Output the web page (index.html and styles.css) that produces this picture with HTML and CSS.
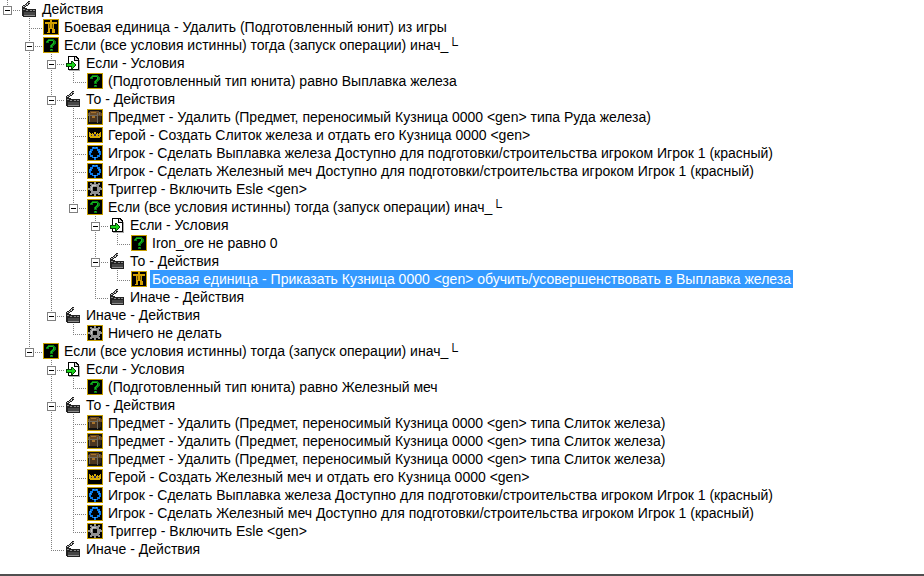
FILE: index.html
```html
<!DOCTYPE html>
<html lang="ru">

<head>
    <meta charset="UTF-8">
    <meta name="viewport" content="width=device-width, initial-scale=1.0">
    <link rel="stylesheet" href="styles.css">
    <title>Действия</title>
</head>

<body>
    <svg class="sprite" aria-hidden="true">
        <symbol id="clap" viewBox="0 0 16 16">
            <path d="M1 8V5h1V4h2V3h1V2h1V1h1V0h2v3H8v1H7v1H5v1H4v1h2v1h9v8H2v-1H1z" fill="#222" />
            <path d="M2 5h1v1H2zM4 4h1v1H4zM6 2h1v2H6zM8 1h1v1H8z" fill="#d0d0d0" />
            <path d="M3 5h1v1H3zM5 3h1v1H5zM7 1h1v1H7z" fill="#777" />
            <path d="M3 11h11v3H3z" fill="#464646" />
            <path d="M2 8h2v1H2zM5 9h2v1H5zM9 9h2v1H9zM12 9h2v1h-2zM3 14h11v1H3z" fill="#8c8c8c" />
        </symbol>
        <symbol id="page" viewBox="0 0 16 16">
            <path d="M3 1h8l3 3v11H3z" fill="#000" />
            <path d="M4 2h5v4h4v8H4z" fill="#fff" />
            <path d="M10 2h1v1h1v1h1v1h-3z" fill="#d8d8d8" />
            <path d="M14 5h1v10h-1zM4 15h11v1H4z" fill="#aaa" />
            <path d="M1 8h5V6h2v1h1v1h1v1h1v2h-1v1H9v1H8v1H6v-2H1z" fill="#074007" />
            <path d="M2 9h5V7h1v1h1v1h1v2H9v1H8v1H7v-2H2z" fill="#19d219" />
        </symbol>
        <symbol id="ask" viewBox="0 0 16 16">
            <path d="M0 0h16v16H0z" fill="#c8a000" />
            <path d="M1 1h14v14H1z" fill="#000" />
            <path d="M4 3h1V2h6v1h1v1h1v3h-1v1h-1v1h-1v2H7V8h1V7h1V6h1V4H6v2H3V4h1zM7 12h3v2H7z" fill="#087c12" />
            <path d="M4 4h1V3h5v1h1v3h-1v1H9v2H8V8h1V7h1V4H5v1H4zM8 12h1v1H8z" fill="#14bd20" />
        </symbol>
        <symbol id="unit" viewBox="0 0 16 16">
            <path d="M0 0h16v16H0z" fill="#c8a000" />
            <path d="M1 1h14v14H1z" fill="#000" />
            <path d="M7 1h2v2h5v2h-3v5h1v4H9v-4H7v4H4v-1h1V5H2V3h5z" fill="#d3a000" />
            <path d="M6 5h1v4H6zM9 5h1v4H9z" fill="#705400" />
        </symbol>
        <symbol id="chest" viewBox="0 0 16 16">
            <path d="M0 0h16v16H0z" fill="#c8a000" />
            <path d="M1 1h14v14H1z" fill="#111" />
            <path d="M1 6V4h1V3h1V2h9v1h2v1h1v3H1z" fill="#6a4a25" />
            <path d="M2 7h9v6H2z" fill="#4b3620" />
            <path d="M11 7h3v5h-1v1h-2z" fill="#30261b" />
            <path d="M1 6h10v1H1zM2 4h1v9H2zM10 4h1v10h-1zM12 3h1v3h-1z" fill="#6f6b60" />
            <path d="M5 7h3v2H5zM4 3h5v1H4z" fill="#a8742d" />
        </symbol>
        <symbol id="crown" viewBox="0 0 16 16">
            <path d="M0 0h16v16H0z" fill="#c8a000" />
            <path d="M1 1h14v14H1z" fill="#000" />
            <path d="M2 5h1v1h1v1h1V6h1v1h1V5h2v2h1V6h1v1h1V6h1V5h1v5h-1v1H3v-1H2z" fill="#d6ac08" />
            <path d="M4 8h1v1H4zM7 7h2v2H7zM11 8h1v1h-1z" fill="#25256c" />
        </symbol>
        <symbol id="player" viewBox="0 0 16 16">
            <path d="M0 0h16v16H0z" fill="#c8a000" />
            <path d="M1 1h14v14H1z" fill="#000" />
            <path d="M5 2h6v2h2v2h1v4h-2V8h-1V6h-1V4H6v2H5v2H4v2H2V6h1V4h2zM3 10h3v2h4v-2h3v2h-2v1H9v2H7v-2H5v-1H3z" fill="#0878e8" />
            <path d="M6 2h1v1H6zM9 2h1v1H9zM3 6h1v1H3zM12 6h1v1h-1zM7 12h2v1H7z" fill="#45a8ff" />
        </symbol>
        <symbol id="gear" viewBox="0 0 16 16">
            <path d="M0 0h16v16H0z" fill="#c8a000" />
            <path d="M1 1h14v14H1z" fill="#000" />
            <path d="M7 1h2v2h2V2h2v2h-1v2h2v1h1v2h-2v2h-1v1h1v2h-2v-1H9v2H7v-2H5v1H3v-2h1v-2H3V9H1V7h2V5h1V4H3V2h2v1h2zM6 6v4h4V6z" fill="#929292" fill-rule="evenodd" />
            <path d="M5 4h4v1H6v1H5zM4 6h1v3H4z" fill="#c4c4c4" />
        </symbol>
    </svg>

    <main>
        <ul class="tree">
            <li>
                <div class="row"><span class="branch"><button class="toggle" aria-label="Свернуть"></button></span><svg class="icon"><use href="#clap" /></svg><span class="label">Действия</span></div>
                <ul>
                    <li><div class="row"><span class="branch"></span><svg class="icon"><use href="#unit" /></svg><span class="label">Боевая единица - Удалить (Подготовленный юнит) из игры</span></div></li>
                    <li>
                        <div class="row"><span class="branch"><button class="toggle" aria-label="Свернуть"></button></span><svg class="icon"><use href="#ask" /></svg><span class="label">Если (все условия истинны) тогда (запуск операции) инач_└</span></div>
                        <ul>
                            <li>
                                <div class="row"><span class="branch"><button class="toggle" aria-label="Свернуть"></button></span><svg class="icon"><use href="#page" /></svg><span class="label">Если - Условия</span></div>
                                <ul>
                                    <li><div class="row"><span class="branch"></span><svg class="icon"><use href="#ask" /></svg><span class="label">(Подготовленный тип юнита) равно Выплавка железа</span></div></li>
                                </ul>
                            </li>
                            <li>
                                <div class="row"><span class="branch"><button class="toggle" aria-label="Свернуть"></button></span><svg class="icon"><use href="#clap" /></svg><span class="label">То - Действия</span></div>
                                <ul>
                                    <li><div class="row"><span class="branch"></span><svg class="icon"><use href="#chest" /></svg><span class="label">Предмет - Удалить (Предмет, переносимый Кузница 0000 &lt;gen&gt; типа Руда железа)</span></div></li>
                                    <li><div class="row"><span class="branch"></span><svg class="icon"><use href="#crown" /></svg><span class="label">Герой - Создать Слиток железа и отдать его Кузница 0000 &lt;gen&gt;</span></div></li>
                                    <li><div class="row"><span class="branch"></span><svg class="icon"><use href="#player" /></svg><span class="label">Игрок - Сделать Выплавка железа Доступно для подготовки/строительства игроком Игрок 1 (красный)</span></div></li>
                                    <li><div class="row"><span class="branch"></span><svg class="icon"><use href="#player" /></svg><span class="label">Игрок - Сделать Железный меч Доступно для подготовки/строительства игроком Игрок 1 (красный)</span></div></li>
                                    <li><div class="row"><span class="branch"></span><svg class="icon"><use href="#gear" /></svg><span class="label">Триггер - Включить Esle &lt;gen&gt;</span></div></li>
                                    <li>
                                        <div class="row"><span class="branch"><button class="toggle" aria-label="Свернуть"></button></span><svg class="icon"><use href="#ask" /></svg><span class="label">Если (все условия истинны) тогда (запуск операции) инач_└</span></div>
                                        <ul>
                                            <li>
                                                <div class="row"><span class="branch"><button class="toggle" aria-label="Свернуть"></button></span><svg class="icon"><use href="#page" /></svg><span class="label">Если - Условия</span></div>
                                                <ul>
                                                    <li><div class="row"><span class="branch"></span><svg class="icon"><use href="#ask" /></svg><span class="label">Iron_ore не равно 0</span></div></li>
                                                </ul>
                                            </li>
                                            <li>
                                                <div class="row"><span class="branch"><button class="toggle" aria-label="Свернуть"></button></span><svg class="icon"><use href="#clap" /></svg><span class="label">То - Действия</span></div>
                                                <ul>
                                                    <li><div class="row"><span class="branch"></span><svg class="icon"><use href="#unit" /></svg><span class="label selected">Боевая единица - Приказать Кузница 0000 &lt;gen&gt; обучить/усовершенствовать в Выплавка железа</span></div></li>
                                                </ul>
                                            </li>
                                            <li><div class="row"><span class="branch"></span><svg class="icon"><use href="#clap" /></svg><span class="label">Иначе - Действия</span></div></li>
                                        </ul>
                                    </li>
                                </ul>
                            </li>
                            <li>
                                <div class="row"><span class="branch"><button class="toggle" aria-label="Свернуть"></button></span><svg class="icon"><use href="#clap" /></svg><span class="label">Иначе - Действия</span></div>
                                <ul>
                                    <li><div class="row"><span class="branch"></span><svg class="icon"><use href="#gear" /></svg><span class="label">Ничего не делать</span></div></li>
                                </ul>
                            </li>
                        </ul>
                    </li>
                    <li>
                        <div class="row"><span class="branch"><button class="toggle" aria-label="Свернуть"></button></span><svg class="icon"><use href="#ask" /></svg><span class="label">Если (все условия истинны) тогда (запуск операции) инач_└</span></div>
                        <ul>
                            <li>
                                <div class="row"><span class="branch"><button class="toggle" aria-label="Свернуть"></button></span><svg class="icon"><use href="#page" /></svg><span class="label">Если - Условия</span></div>
                                <ul>
                                    <li><div class="row"><span class="branch"></span><svg class="icon"><use href="#ask" /></svg><span class="label">(Подготовленный тип юнита) равно Железный меч</span></div></li>
                                </ul>
                            </li>
                            <li>
                                <div class="row"><span class="branch"><button class="toggle" aria-label="Свернуть"></button></span><svg class="icon"><use href="#clap" /></svg><span class="label">То - Действия</span></div>
                                <ul>
                                    <li><div class="row"><span class="branch"></span><svg class="icon"><use href="#chest" /></svg><span class="label">Предмет - Удалить (Предмет, переносимый Кузница 0000 &lt;gen&gt; типа Слиток железа)</span></div></li>
                                    <li><div class="row"><span class="branch"></span><svg class="icon"><use href="#chest" /></svg><span class="label">Предмет - Удалить (Предмет, переносимый Кузница 0000 &lt;gen&gt; типа Слиток железа)</span></div></li>
                                    <li><div class="row"><span class="branch"></span><svg class="icon"><use href="#chest" /></svg><span class="label">Предмет - Удалить (Предмет, переносимый Кузница 0000 &lt;gen&gt; типа Слиток железа)</span></div></li>
                                    <li><div class="row"><span class="branch"></span><svg class="icon"><use href="#crown" /></svg><span class="label">Герой - Создать Железный меч и отдать его Кузница 0000 &lt;gen&gt;</span></div></li>
                                    <li><div class="row"><span class="branch"></span><svg class="icon"><use href="#player" /></svg><span class="label">Игрок - Сделать Выплавка железа Доступно для подготовки/строительства игроком Игрок 1 (красный)</span></div></li>
                                    <li><div class="row"><span class="branch"></span><svg class="icon"><use href="#player" /></svg><span class="label">Игрок - Сделать Железный меч Доступно для подготовки/строительства игроком Игрок 1 (красный)</span></div></li>
                                    <li><div class="row"><span class="branch"></span><svg class="icon"><use href="#gear" /></svg><span class="label">Триггер - Включить Esle &lt;gen&gt;</span></div></li>
                                </ul>
                            </li>
                            <li><div class="row"><span class="branch"></span><svg class="icon"><use href="#clap" /></svg><span class="label">Иначе - Действия</span></div></li>
                        </ul>
                    </li>
                </ul>
            </li>
        </ul>
    </main>

    <script>
        document.querySelectorAll(".toggle").forEach(btn => {
            btn.addEventListener("click", () => {
                btn.closest("li").classList.toggle("closed")
            });
        })
    </script>
</body>

</html>
```

FILE: styles.css
```css
* {
    margin: 0;
    padding: 0;
    box-sizing: border-box;
}

body {
    background: #fff;
    color: #000;
    font-family: "Liberation Sans", Arial, sans-serif;
    font-size: 14px;
    line-height: 18px;
}

main {
    min-height: 100vh;
    border-bottom: 2px solid #505050;
}

.sprite {
    position: absolute;
    width: 0;
    height: 0;
}

ul {
    list-style-type: none;
}

.tree ul {
    padding-left: 22px;
}

/* vertical dotted line */
.tree li {
    background: repeating-linear-gradient(to bottom, #808080 0 1px, transparent 1px 2px) 7px 0 / 1px 100% no-repeat;
}

.tree li:last-child {
    background-size: 1px 11px;
}

.row {
    display: flex;
    align-items: center;
    height: 18px;
    white-space: nowrap;
}

/* horizontal dotted line up to the icon */
.branch {
    width: 21px;
    height: 18px;
    padding: 6px 0 0 3px;
    background: repeating-linear-gradient(to right, #808080 0 1px, transparent 1px 2px) 7px 10px / 13px 1px no-repeat;
}

.toggle {
    display: block;
    width: 9px;
    height: 9px;
    border: 1px solid #808080;
    background: linear-gradient(#000, #000) center / 5px 1px no-repeat #fff;
    cursor: pointer;
}

.icon {
    width: 16px;
    height: 16px;
    margin-right: 3px;
    shape-rendering: crispEdges;
}

.label {
    padding: 0 2px;
}

.selected {
    background: #3399ff;
    color: #fff;
}

.closed > ul {
    display: none;
}

.closed > .row .toggle {
    background: linear-gradient(#000, #000) center / 5px 1px no-repeat, linear-gradient(#000, #000) center / 1px 5px no-repeat #fff;
}
```
